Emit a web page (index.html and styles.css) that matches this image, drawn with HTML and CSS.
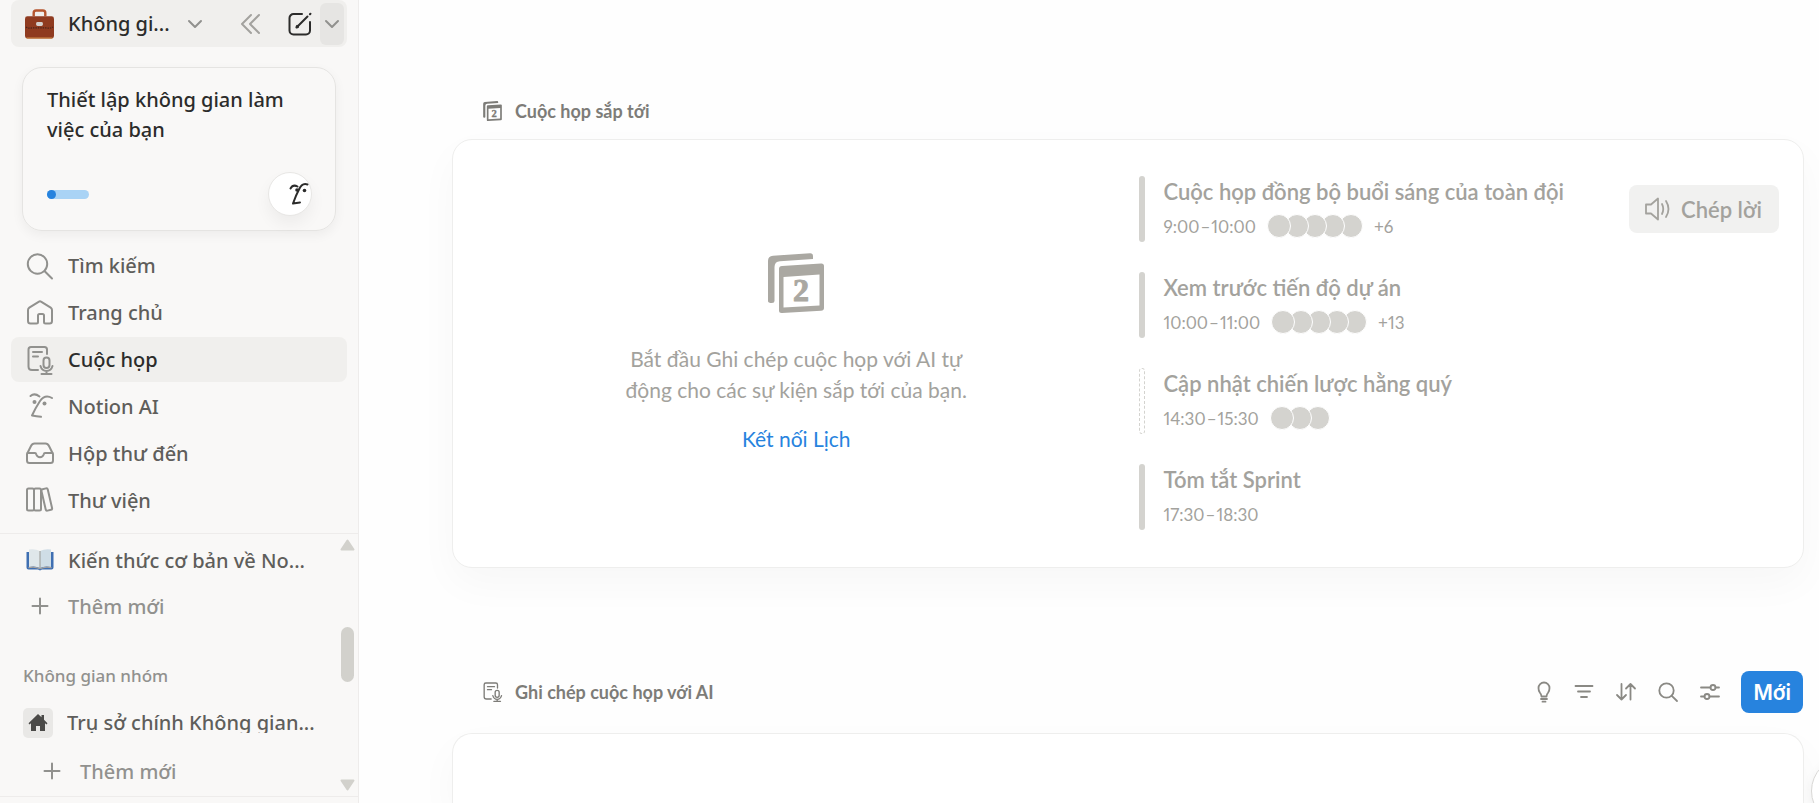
FILE: index.html
```html
<!DOCTYPE html>
<html lang="vi">
<head>
<meta charset="utf-8">
<title>Cuộc họp</title>
<meta name="viewport" content="width=device-width, initial-scale=1">
<link rel="stylesheet" href="styles.css">
</head>
<body>
<div class="app">
  <aside class="sidebar">
    <header class="workspace">
      <button class="workspace-switch" type="button">
        <svg class="icon-lg" viewBox="0 0 30 32" aria-hidden="true">
          <path d="M9 8V4.500Q9 2 11.500 2h7Q21 2 21 4.500V8" fill="none" stroke="#b5562f" stroke-width="2.500"/>
          <rect x="0" y="8" width="30" height="23" rx="2.500" fill="#8f3b20" stroke="none"/>
          <path d="M1.500 30.500h27" stroke="#c98242" stroke-width="1.200"/>
          <path d="M1 19q3 2 6 1h16q3 1 6-1" fill="none" stroke="#4a241a" stroke-width="1.200" stroke-dasharray="1.500 1"/>
          <rect x="11.500" y="14" width="7" height="4" rx="1.500" fill="#d4d0cd" stroke="none"/>
        </svg>
        <span class="workspace-name">Không gi...</span>
        <svg class="chevron" viewBox="0 0 14 8" aria-hidden="true"><path d="M1 1l6 6 6-6"/></svg>
      </button>
      <button class="tool collapse" type="button" aria-label="Thu gọn"><svg width="20" height="20" viewBox="0 0 20 20"><path d="M10 1L1 10l9 9M18 1l-9 9 9 9"/></svg></button>
      <button class="tool compose" type="button" aria-label="Trang mới"><svg width="24" height="24" viewBox="0 0 24 24"><path d="M14 2H5.500A4 4 0 0 0 1.500 6v12.500a4 4 0 0 0 4 4H18a4 4 0 0 0 4-4V10M9 15L19.500 4.500"/><path d="M8.500 15.500l1.500-.600-.900-.900zM22 2.200l.400-.400" stroke-width="2.200"/></svg></button>
      <button class="tool more" type="button" aria-label="Tùy chọn"><svg class="chevron" viewBox="0 0 14 8"><path d="M1 1l6 6 6-6"/></svg></button>
    </header>

    <section class="setup">
      <h2 class="setup-title">Thiết lập không gian làm việc của bạn</h2>
      <div class="setup-foot">
        <div class="progress"><span class="progress-value"></span></div>
        <button class="assistant" type="button" aria-label="Notion AI">
          <svg width="20" height="24" viewBox="0 0 20 24"><path d="M1.500 6.500q2.500-4.500 7-2M4 21.500Q7 13 10 7.500 13 .500 18.500 2.500M4 21.500l7-1"/><circle cx="8" cy="8" r="1.800"/><circle cx="15.500" cy="8.500" r="1.800"/></svg>
        </button>
      </div>
    </section>

    <nav class="nav">
      <a class="nav-item" href="#"><svg class="icon" viewBox="0 0 28 28"><circle cx="11.500" cy="12" r="9.700"/><path d="M18.700 19.200L26 26.500"/></svg>Tìm kiếm</a>
      <a class="nav-item" href="#"><svg class="icon" viewBox="0 0 28 28"><path d="M2 11q0-1.500 1.300-2.400L12.600 2.800q1.400-.900 2.800 0l9.300 5.800Q26 9.500 26 11v11q0 2.500-2.500 2.500h-4q-1.500 0-1.500-1.500v-6.500q0-1.500-1.500-1.500h-3Q12 15 12 16.500V23q0 1.500-1.500 1.500h-6Q2 24.500 2 22z"/></svg>Trang chủ</a>
      <a class="nav-item active" href="#" aria-current="page"><svg class="icon" viewBox="0 0 28 28"><path d="M12 24H6q-3.500 0-3.500-3.500V3.500Q2.500 1 5 1h13.500Q21 1 21 3.500V8M7 6h9M7 10.500h5"/><rect x="17.500" y="11.500" width="6" height="10.500" rx="3"/><path d="M14.500 20q1.500 5 6 5t6-5M20.500 25v3M15.500 28h10"/></svg>Cuộc họp</a>
      <a class="nav-item" href="#"><svg class="icon" viewBox="0 0 28 28"><path d="M4.500 3q4-3.500 9 .500M6 22.500q3.500-7.500 8-14.500Q19 1 26 5M6 22.500q4.500.800 9 1.300"/><circle class="dot" cx="8.500" cy="9" r="2"/><circle class="dot" cx="18.500" cy="10.500" r="2"/></svg>Notion AI</a>
      <a class="nav-item" href="#"><svg class="icon" viewBox="0 0 28 28"><path d="M1 14l4-8Q6.200 3.500 8.500 3.500h11q2.300 0 3.500 2.500l4 8v6.500q0 2.500-2.500 2.500h-21Q1 23 1 20.500zM1.200 13H9q1 0 1.300 1.500 1 2.700 3.700 2.700t3.700-2.700q.300-1.500 1.300-1.500h7.800"/></svg>Hộp thư đến</a>
      <a class="nav-item" href="#"><svg class="icon" viewBox="0 0 28 28"><rect x="1" y="1.500" width="7" height="22" rx="1.500"/><rect x="8" y="1.500" width="7" height="22" rx="1.500"/><rect x="17.500" y="1.500" width="6.500" height="22" rx="1.500" transform="rotate(-13 20.700 12.500)"/></svg>Thư viện</a>
    </nav>

    <div class="tree">
      <div class="tree-list">
        <a class="tree-item" href="#">
          <svg class="icon" viewBox="0 0 28 28"><g stroke="none"><path d="M.500 6h27v15.500q0 2-2 2H16l-2 1-2-1H2.500q-2 0-2-2z" fill="#3f6fb2"/><path d="M3 3.500q6-1 11 1.500v17q-5-2.500-11-1z" fill="#dfe7ea"/><path d="M25 3.500q-6-1-11 1.500v17q5-2.500 11-1z" fill="#cfdde6"/><path d="M13.500 5h1v17h-1z" fill="#9a9a94"/><path d="M2.500 21q6-1.500 11.500 1.200Q19.500 19.500 25.500 21v1.300q-6-1.500-11.500 1-5.500-2.500-11.500-1z" fill="#a8a39e"/></g></svg>
          <span class="tree-label">Kiến thức cơ bản về No...</span>
        </a>
        <button class="tree-item add" type="button"><svg class="icon" viewBox="0 0 28 28"><path d="M6.500 14h15M14 6.500v15"/></svg>Thêm mới</button>
        <h3 class="tree-heading">Không gian nhóm</h3>
        <a class="tree-item team" href="#">
          <span class="team-icon"><svg width="20" height="20" viewBox="0 0 20 20"><path d="M10 1l3.500 3.300V2H16v4.800l3.500 3.400-1 1.300L17 10.300V18h-5v-5H8v5H3v-7.700L1.500 11.500l-1-1.300z"/></svg></span>
          <span class="tree-label clipped">Trụ sở chính Không gian...</span>
        </a>
        <button class="tree-item add nested" type="button"><svg class="icon" viewBox="0 0 28 28"><path d="M6.500 14h15M14 6.500v15"/></svg>Thêm mới</button>
      </div>
      <div class="scroller" aria-hidden="true">
        <svg width="15" height="12" viewBox="0 0 15 12"><path d="M7.500 1.500L13.500 10.500h-12z"/></svg>
        <span class="thumb"></span>
        <svg width="15" height="12" viewBox="0 0 15 12"><path d="M7.500 10.500L13.500 1.500h-12z"/></svg>
      </div>
    </div>
  </aside>

  <main class="content">
    <section class="block">
      <header class="block-head">
        <svg class="head-icon solid" viewBox="0 0 56 60" aria-hidden="true"><path d="M0 8q0-5 5-5.300L42 .200q3-.200 3 3V6L12 8.200Q6.500 8.500 6.500 14v34q0 2-2.500 2-4 0-4-2z"/><path fill-rule="evenodd" d="M14 13l39-2.500q3-.200 3 2.500v42q0 2.500-3 2.700L14 60q-3 .200-3-2.500V16q0-2.800 3-3zm2 10v31.500l35-2V21z"/><text x="25" y="49">2</text></svg>
        <h1 class="block-title">Cuộc họp sắp tới</h1>
      </header>
      <div class="card upcoming">
        <div class="connect">
          <svg class="calendar solid" viewBox="0 0 56 60" aria-hidden="true"><path d="M0 8q0-5 5-5.300L42 .200q3-.200 3 3V6L12 8.200Q6.500 8.500 6.500 14v34q0 2-2.500 2-4 0-4-2z"/><path fill-rule="evenodd" d="M14 13l39-2.500q3-.200 3 2.500v42q0 2.500-3 2.700L14 60q-3 .200-3-2.500V16q0-2.800 3-3zm1.500 11v30.500l36-2V21.500z"/><text x="25" y="48">2</text></svg>
          <p class="connect-text">Bắt đầu Ghi chép cuộc họp với AI tự động cho các sự kiện sắp tới của bạn.</p>
          <a class="connect-link" href="#">Kết nối Lịch</a>
        </div>
        <ul class="events">
          <li class="event">
            <div class="event-body"><h2 class="event-title">Cuộc họp đồng bộ buổi sáng của toàn đội</h2>
            <div class="event-meta"><time>9:00&#8202;–&#8202;10:00</time><span class="people"><i></i><i></i><i></i><i></i><i></i></span><span>+6</span></div></div>
            <button class="transcribe" type="button"><svg width="26" height="24" viewBox="0 0 26 24"><path d="M1 7.500h5L13 1.500v21L6 16.500H1zM17 7q2.500 5 0 10M21 4q5 8 0 16"/></svg>Chép lời</button>
          </li>
          <li class="event">
            <div class="event-body"><h2 class="event-title">Xem trước tiến độ dự án</h2>
            <div class="event-meta"><time>10:00&#8202;–&#8202;11:00</time><span class="people"><i></i><i></i><i></i><i></i><i></i></span><span>+13</span></div></div>
          </li>
          <li class="event tentative">
            <div class="event-body"><h2 class="event-title">Cập nhật chiến lược hằng quý</h2>
            <div class="event-meta"><time>14:30&#8202;–&#8202;15:30</time><span class="people"><i></i><i></i><i></i></span></div></div>
          </li>
          <li class="event">
            <div class="event-body"><h2 class="event-title">Tóm tắt Sprint</h2>
            <div class="event-meta"><time>17:30&#8202;–&#8202;18:30</time></div></div>
          </li>
        </ul>
      </div>
    </section>

    <section class="block notes">
      <header class="block-head">
        <svg class="head-icon line" viewBox="0 0 28 30" aria-hidden="true"><path d="M12 25.500H5q-3.500 0-3.500-3.500V4Q1.500 1.500 4 1.500h15q2.500 0 2.500 2.500v5M6.500 7H17M6.500 11.500h6"/><rect x="18" y="12.500" width="6" height="10.500" rx="3"/><path d="M14.500 20.500q1.500 5.500 6.500 5.500t6.500-5.500M21 26v3M16 29h10"/></svg>
        <h1 class="block-title">Ghi chép cuộc họp với AI</h1>
        <div class="actions">
          <button class="action" type="button" aria-label="Gợi ý"><svg viewBox="0 0 22 22"><path d="M10.500 15.500q0-2-1.700-4Q7.500 9.800 7.500 7a5.500 5.500 0 0 1 11 0q0 2.800-1.300 4.500-1.700 2-1.700 4zM10 18h6M11.500 20.700h3"/></svg></button>
          <button class="action" type="button" aria-label="Bộ lọc"><svg viewBox="0 0 22 22"><path d="M2.500 5h17M5 10.500h12M8 16h6"/></svg></button>
          <button class="action" type="button" aria-label="Sắp xếp"><svg viewBox="0 0 22 22"><path d="M6.500 3v15.500M2 14l4.500 4.500L11 14M15.500 18.500V3M11 7.500L15.500 3 20 7.500"/></svg></button>
          <button class="action" type="button" aria-label="Tìm kiếm"><svg viewBox="0 0 22 22"><circle cx="9.500" cy="9.500" r="7.200"/><path d="M14.800 14.800L20 20"/></svg></button>
          <button class="action" type="button" aria-label="Cài đặt"><svg viewBox="0 0 22 22"><path d="M2 6.500h9.500M16.500 6.500H20M2 15.500h3.500M10.500 15.500H20"/><circle cx="14" cy="6.500" r="2.500"/><circle cx="8" cy="15.500" r="2.500"/></svg></button>
          <button class="primary" type="button">Mới</button>
        </div>
      </header>
      <div class="card list"></div>
    </section>
  </main>
  <button class="float" type="button" aria-label="Trợ giúp"></button>
</div>
</body>
</html>
```
FILE: styles.css
```css
*, *::before { box-sizing: border-box; margin: 0; padding: 0; }
body { font-family: "Lato", "Noto Sans", sans-serif; background: #fefefe; color: #2c2c2b; font-size: 20px; }
button { font: inherit; color: inherit; background: none; border: 0; cursor: pointer; }
a { color: inherit; text-decoration: none; }
ul { list-style: none; }
svg { display: block; flex: none; fill: none; stroke: currentColor; stroke-width: 2; stroke-linecap: round; stroke-linejoin: round; overflow: visible; }
.app { display: flex; height: 100vh; overflow: hidden; }

.sidebar { width: 359px; flex: none; display: flex; flex-direction: column; background: #f9f8f7; border-right: 1px solid #eeeceb; font-family: "Noto Sans", sans-serif; font-weight: 500; }
.workspace { display: flex; align-items: center; height: 47px; margin: 0 11px; padding: 0 3px 0 14px; background: #f0efed; border-radius: 8px; }
.workspace-switch { display: flex; align-items: center; flex: 1; gap: 14px; }
.icon-lg { width: 29px; height: 32px; stroke-linecap: butt; }
.workspace-name { margin-right: 4px; }
.chevron { width: 14px; height: 8px; stroke: #91918e; }
.tool { display: grid; place-items: center; }
.collapse { width: 20px; color: #a3a29e; margin-right: 27px; }
.compose { width: 24px; margin-right: 8px; }
.more { width: 24px; height: 42px; border-radius: 6px; background: #e6e5e3; }

.setup { margin: 20px 22px 0; height: 164px; padding: 17px 23px 14px 24px; border: 1px solid #e5e4e2; border-radius: 20px; box-shadow: 0 4px 12px rgba(0, 0, 0, .05); display: flex; flex-direction: column; justify-content: space-between; }
.setup-title { font-size: 20px; line-height: 30px; font-weight: 500; }
.setup-foot { display: flex; align-items: center; justify-content: space-between; }
.progress { width: 42px; height: 9px; border-radius: 5px; background: #a9d3f5; }
.progress-value { display: block; width: 9px; height: 9px; border-radius: 50%; background: #2783de; }
.assistant { width: 44px; height: 44px; border-radius: 50%; background: #fff; border: 1px solid #e8e7e5; box-shadow: 0 8px 16px rgba(0, 0, 0, .05); display: grid; place-items: center end; }
.assistant svg { margin-right: 2px; }
.assistant circle { fill: currentColor; stroke: none; }

.nav { display: flex; flex-direction: column; gap: 2px; padding: 12px 11px 0; flex: none; }
.nav-item { display: flex; align-items: center; gap: 14px; height: 45px; padding-left: 15px; border-radius: 8px; color: #5f5e5b; }
.nav-item.active { background: #f0efed; color: #2c2c2b; }
.icon { width: 28px; height: 28px; stroke: #91918e; }
.dot { fill: #91918e; stroke: none; }

.tree { margin-top: 10px; height: 264px; flex: none; border-top: 1px solid #eeeceb; border-bottom: 1px solid #eeeceb; display: flex; padding-left: 11px; }
.tree-list { flex: 1; min-width: 0; display: flex; flex-direction: column; padding-top: 3px; }
.tree-item { display: flex; align-items: center; gap: 14px; height: 46px; padding-left: 15px; color: #5f5e5b; text-align: left; }
.tree-label { white-space: nowrap; }
.add { color: #91918e; }
.tree-heading { margin: 36px 0 0 12px; font-size: 17px; line-height: 22px; font-weight: 500; color: #91918e; }
.team { padding-left: 12px; margin-top: 13px; }
.team-icon { width: 30px; height: 30px; border-radius: 5px; background: #e9e8e6; display: grid; place-items: center; }
.team-icon svg { fill: #4b4a48; stroke: none; }
.clipped { overflow: hidden; line-height: 20px; }
.nested { padding-left: 27px; margin-top: 2px; }
.scroller { width: 18px; display: grid; grid-template-rows: 12px 1fr 12px; justify-items: center; padding: 5px 3px 5px 0; }
.scroller svg { fill: #d2d1cc; stroke: #d2d1cc; }
.thumb { width: 13px; height: 55px; margin-top: 76px; border-radius: 7px; background: #d2d1cc; }

.content { flex: 1; min-width: 0; padding: 94px 15px 0 93px; display: flex; flex-direction: column; }
.block-head { display: flex; align-items: center; height: 34px; margin-bottom: 11px; padding-left: 31px; color: #7d7c78; }
.head-icon { width: 19px; height: 20px; margin-right: 13px; }
.block-title { font-size: 18px; font-weight: 700; }
.solid { fill: currentColor; stroke: none; }
.solid text { font: bold 32px "Liberation Serif", serif; stroke: currentColor; stroke-width: 1; }
.card { background: #fff; border: 1px solid #eeeeed; border-radius: 20px; box-shadow: 0 16px 40px rgba(0, 0, 0, .03); }
.upcoming { display: grid; grid-template-columns: 687fr 664fr; min-height: 429px; }
.connect { display: flex; flex-direction: column; align-items: center; padding: 113px 20px 0; color: #a3a29d; text-align: center; }
.calendar { width: 56px; height: 60px; color: #aaa8a2; }
.connect-text { width: 352px; margin-top: 30px; font-size: 21px; line-height: 31px; }
.connect-link { margin-top: 18px; font-size: 21px; line-height: 31px; color: #2783de; }
.events { display: flex; flex-direction: column; gap: 30px; padding: 36px 24px 36px 0; color: #a3a29d; }
.event { display: flex; justify-content: space-between; align-items: center; height: 66px; }
.event::before { content: ""; width: 6px; height: 66px; flex: none; border-radius: 3px; background: #d4d3cf; margin-right: 18px; }
.tentative::before { background: none; border: 1px dashed #d4d3cf; }
.event-body { flex: 1; display: flex; flex-direction: column; gap: 10px; }
.event-title { font-size: 22px; line-height: 24px; font-weight: 600; }
.event-meta { display: flex; align-items: center; height: 24px; gap: 11px; font-size: 17px; font-variant-numeric: proportional-nums; }
.people { display: flex; }
.people i { position: relative; width: 24px; height: 24px; margin-right: -6px; border: 1px solid #fff; border-radius: 50%; background: #d4d3cf; }
.people i:first-child { z-index: 5; }
.people i:nth-child(2) { z-index: 4; }
.people i:nth-child(3) { z-index: 3; }
.people i:nth-child(4) { z-index: 2; }
.people i:last-child { margin-right: 0; }
.transcribe { display: flex; align-items: center; gap: 10px; height: 48px; padding: 0 17px 0 16px; border-radius: 8px; background: #f1f1f0; font-size: 22px; font-weight: 600; }
.transcribe svg { stroke-width: 1.8; }

.notes { margin-top: 103px; flex: 1; display: flex; flex-direction: column; }
.notes .block-head { height: 42px; margin-bottom: 20px; }
.actions { display: flex; align-items: center; gap: 20px; margin-left: auto; margin-right: 1px; color: #8a8984; }
.action svg { width: 22px; height: 22px; stroke-width: 1.8; }
.primary { height: 42px; padding: 0 12px; border-radius: 8px; background: #2783de; color: #fff; font-family: "Inter", sans-serif; font-weight: 600; font-size: 21px; }
.list { flex: 1; border-bottom: 0; border-radius: 20px 20px 0 0; }
.float { position: fixed; right: -60px; bottom: -22px; width: 68px; height: 68px; border-radius: 50%; background: #fff; border: 1px solid #d8d7d5; box-shadow: 0 4px 12px rgba(0, 0, 0, .06); }
```
